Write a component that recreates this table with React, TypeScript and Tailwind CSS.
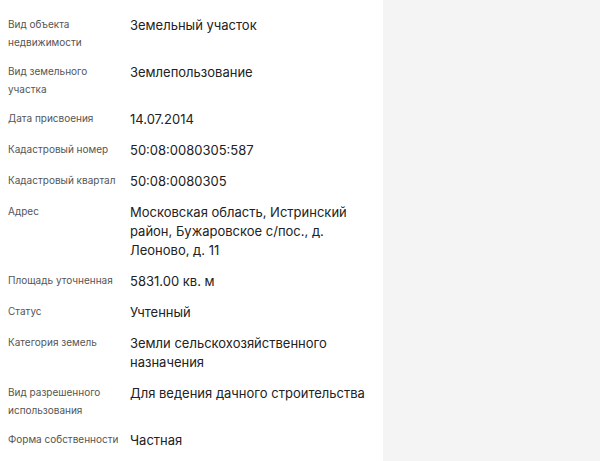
import React from 'react';

const ROWS = [
  { label: 'Вид объекта недвижимости', value: 'Земельный участок' },
  { label: 'Вид земельного участка', value: 'Землепользование' },
  { label: 'Дата присвоения', value: '14.07.2014' },
  { label: 'Кадастровый номер', value: '50:08:0080305:587' },
  { label: 'Кадастровый квартал', value: '50:08:0080305' },
  { label: 'Адрес', value: 'Московская область, Истринский район, Бужаровское с/пос., д. Леоново, д. 11' },
  { label: 'Площадь уточненная', value: '5831.00 кв. м' },
  { label: 'Статус', value: 'Учтенный' },
  { label: 'Категория земель', value: 'Земли сельскохозяйственного назначения' },
  { label: 'Вид разрешенного использования', value: 'Для ведения дачного строительства' },
  { label: 'Форма собственности', value: 'Частная' },
];

export default function App() {
  return (
    <div className="flex h-[461px] w-[600px] overflow-hidden bg-[#f4f4f4] font-['Inter','Noto_Sans',sans-serif]">
      <div className="w-[383px] shrink-0 bg-white pl-2 pr-2 pt-4">
        <div className="flex flex-col gap-3">
          {ROWS.map((row) => (
            <div key={row.label} className="flex items-start">
              <div className="w-[122px] shrink-0 pr-2 text-[10px] leading-[17.5px] text-[#555]">
                {row.label}
              </div>
              <div className="flex-1 text-[13px] leading-[19px] text-[#222]">{row.value}</div>
            </div>
          ))}
        </div>
      </div>
      <div className="flex-1" />
    </div>
  );
}
